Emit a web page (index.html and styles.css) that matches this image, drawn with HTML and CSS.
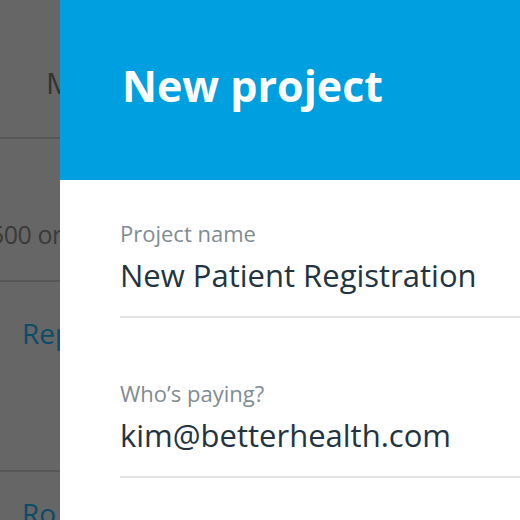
FILE: index.html
```html
<!DOCTYPE html>
<html>
<head>
<meta charset="utf-8">
<link rel="stylesheet" href="styles.css">
</head>
<body>
<div class="page">
  <div class="row head"><span class="th">M</span></div>
  <div class="row r1"><span class="cell">500 or</span></div>
  <div class="row r2"><a class="link">Rep</a></div>
  <div class="row r3"><a class="link">Ro</a></div>
</div>
<aside class="panel">
  <header class="panel-head"><h1>New project</h1></header>
  <div class="panel-body">
    <div class="field">
      <div class="label">Project name</div>
      <div class="value">New Patient Registration</div>
    </div>
    <div class="field">
      <div class="label">Who’s paying?</div>
      <div class="value">kim@betterhealth.com</div>
    </div>
  </div>
</aside>
</body>
</html>
```
FILE: styles.css
```css
* { box-sizing: border-box; }
html, body { margin: 0; padding: 0; }
body {
  width: 520px;
  height: 520px;
  overflow: hidden;
  background: #666666;
  font-family: "Open Sans", "Noto Sans", sans-serif;
  position: relative;
}
.page { width: 520px; }
.row { border-bottom: 2px solid #575757; }
.head { height: 139px; padding: 62px 0 0 46px; }
.th { font-size: 30px; color: #333; }
.r1 { height: 143px; padding: 78px 0 0 0; }
.cell { font-size: 25px; color: #3a3a3a; margin-left: -10px; display: inline-block; letter-spacing: -0.5px; }
.r2 { height: 190px; padding: 32px 0 0 22px; }
.r3 { padding: 22px 0 0 22px; border: 0; }
.link { font-size: 28px; color: #0b4c69; }
.panel {
  position: absolute;
  top: 0;
  left: 60px;
  right: 0;
  bottom: 0;
  background: #fff;
}
.panel-head {
  height: 180px;
  background: #009fdf;
  padding: 64px 0 0 62px;
}
.panel-head h1 {
  margin: 0;
  color: #fff;
  font-size: 43px;
  font-weight: 700;
  line-height: 1;
}
.panel-body {
  padding: 38px 0 0 60px;
  display: flex;
  flex-direction: column;
  gap: 60px;
}
.field {
  border-bottom: 2px solid #e1e1e1;
  height: 100px;
}
.label { font-size: 22px; color: #7f8c93; line-height: 30px; }
.value { font-size: 31px; color: #23343f; line-height: 46px; margin-top: 4px; }
```
